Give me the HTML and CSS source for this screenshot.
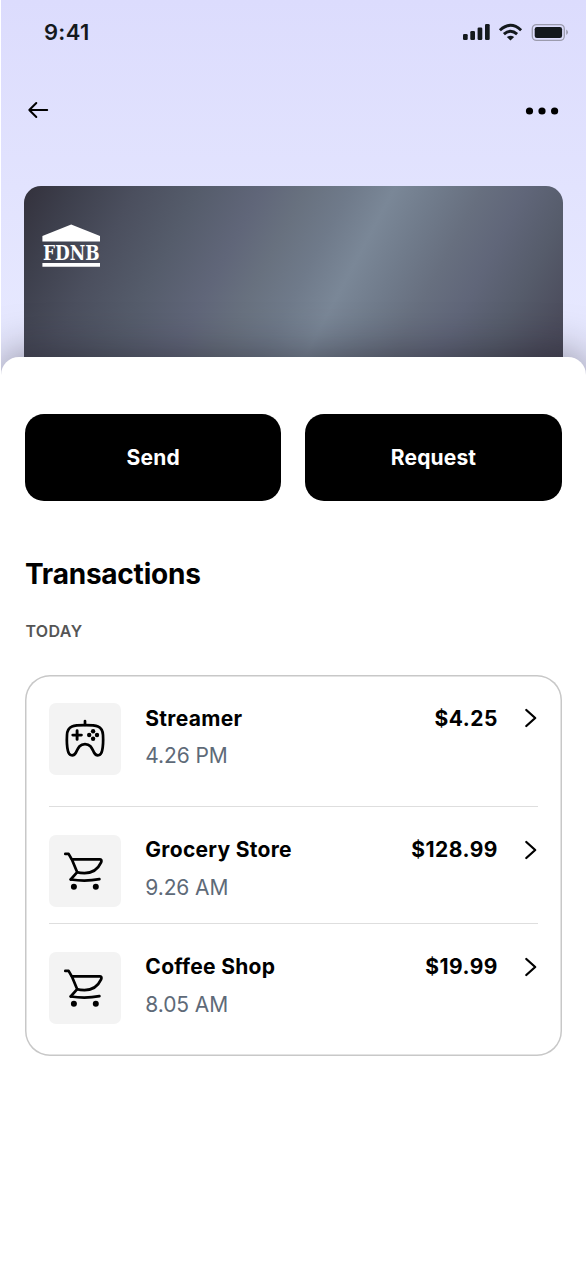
FILE: index.html
```html
<!DOCTYPE html>
<html lang="en">
<head>
<meta charset="utf-8">
<title>Transactions</title>
<link rel="stylesheet" href="styles.css">
</head>
<body>
<svg class="defs" aria-hidden="true">
  <symbol id="cart" viewBox="0 0 72 72">
    <g fill="none" stroke="#000" stroke-width="2.7" stroke-linecap="round" stroke-linejoin="round">
      <path d="M16.3 18.9H19.6L23 24.7L28.2 37.2L21.7 44.5"/>
      <path d="M23 24.3H51Q53.2 24.5 52.1 27.4C49 34.2 43.5 38.1 35.5 38.2C32 38.2 30 37.9 28.2 37.3"/>
      <path d="M21.8 44.5C31 45.9 42 45.7 50.4 44.2"/>
    </g>
    <circle cx="24.9" cy="51.8" r="3"/><circle cx="46.8" cy="51.8" r="3"/>
  </symbol>
  <symbol id="chevron" viewBox="0 0 14 20">
    <path d="M2.3 2L11.2 10L2.3 18" fill="none" stroke="#000" stroke-width="2.3" stroke-linecap="round" stroke-linejoin="round"/>
  </symbol>
</svg>
<div class="screen">
  <header class="hero">
    <div class="status">
      <span class="time">9:41</span>
      <svg class="indicators" width="108" height="20" viewBox="0 0 108 20">
        <g fill="#14191d">
          <rect x="1" y="12" width="4.7" height="6" rx="1.3"/>
          <rect x="8.3" y="9" width="4.7" height="9" rx="1.3"/>
          <rect x="15.6" y="5.5" width="4.7" height="12.5" rx="1.3"/>
          <rect x="23" y="2" width="4.7" height="16" rx="1.3"/>
          <path d="M48.5 18.6L44.8 15Q48.5 12.4 52.2 15Z"/>
          <rect x="72.7" y="5" width="27.4" height="11" rx="2.2"/>
        </g>
        <path d="M37.9 8.2Q48.5-1.5 59.1 8.2M41.9 12.2Q48.5 6.3 55.1 12.2" fill="none" stroke="#14191d" stroke-width="2.9"/>
        <rect x="70.3" y="2.6" width="32" height="15.8" rx="4.2" fill="none" stroke="#9b9bad" stroke-width="1.3"/>
        <path d="M104.2 7.6Q106 8.5 106 10.3T104.2 13Z" fill="#9b9bad"/>
      </svg>
    </div>
    <nav class="nav">
      <svg width="22" height="18" viewBox="0 0 22 18"><path d="M2.3 9H20.2M9.3 2L2.3 9L9.3 16" fill="none" stroke="#000" stroke-width="2" stroke-linecap="round" stroke-linejoin="round"/></svg>
      <svg width="34" height="10" viewBox="0 0 34 10"><circle cx="4.5" cy="5" r="3.6"/><circle cx="17" cy="5" r="3.6"/><circle cx="29.6" cy="5" r="3.6"/></svg>
    </nav>
    <div class="card">
      <svg class="bank" width="78" height="60" viewBox="0 0 78 60">
        <path d="M10.4 17.9L39.2 6.4L68 17.9V23.6H10.4Z"/>
        <text x="11" y="41.6" textLength="56.6" lengthAdjust="spacingAndGlyphs">FDNB</text>
        <path d="M10.4 45H68V48.7H10.4Z"/>
      </svg>
    </div>
  </header>
  <main class="sheet">
    <div class="actions">
      <button class="action">Send</button>
      <button class="action">Request</button>
    </div>
    <h1 class="title">Transactions</h1>
    <h2 class="day">TODAY</h2>
    <ul class="list">
      <li class="item item-first">
        <span class="tile">
          <svg width="72" height="72" viewBox="0 0 72 72">
            <g fill="none" stroke="#000" stroke-width="2.7" stroke-linecap="round" stroke-linejoin="round">
              <path d="M36 22V18"/>
              <path d="M36 22.2C42 22.2 46 22.3 49 23.5C52.5 25 53.8 28 54 32C54.3 37 54.2 43 53.1 47.8C52 53.3 47.3 53.7 45 49.5C43 45.5 41.8 41.1 36 41.1S29 45.5 27 49.5C24.7 53.7 20 53.3 18.9 47.8C17.8 43 17.7 37 18 32C18.2 28 19.5 25 23 23.5C26 22.3 30 22.2 36 22.2Z"/>
              <path d="M28.1 27.8V36.4M23.8 32.1H32.4" stroke-width="2.9"/>
            </g>
            <circle cx="44.1" cy="28.2" r="2.2"/><circle cx="44.1" cy="35.8" r="2.2"/><circle cx="40.2" cy="32" r="2.2"/><circle cx="48" cy="32" r="2.2"/>
          </svg>
        </span>
        <div class="info"><p class="name">Streamer</p><p class="when">4.26 PM</p></div>
        <span class="amount">$4.25</span>
        <svg class="chevron"><use href="#chevron"/></svg>
      </li>
      <li class="item">
        <span class="tile"><svg width="72" height="72"><use href="#cart"/></svg></span>
        <div class="info"><p class="name">Grocery Store</p><p class="when">9.26 AM</p></div>
        <span class="amount">$128.99</span>
        <svg class="chevron"><use href="#chevron"/></svg>
      </li>
      <li class="item">
        <span class="tile"><svg width="72" height="72"><use href="#cart"/></svg></span>
        <div class="info"><p class="name">Coffee Shop</p><p class="when">8.05 AM</p></div>
        <span class="amount">$19.99</span>
        <svg class="chevron"><use href="#chevron"/></svg>
      </li>
    </ul>
  </main>
</div>
</body>
</html>
```
FILE: styles.css
```css
* { box-sizing: border-box; }
body, h1, h2, p, ul { margin: 0; padding: 0; }
body { background: #fff; font-family: Inter, sans-serif; color: #000; }
.defs { display: block; width: 0; height: 0; }
svg { display: block; flex: none; }
.screen { width: 585px; height: 1266px; margin-left: 1px; overflow: hidden; background: linear-gradient(#dcdcfd 0, #e8eaff 374px); }
.hero { height: 357px; display: flex; flex-direction: column; }
.status { height: 64px; display: flex; justify-content: space-between; padding: 0 16px 0 43px; }
.time { font-size: 22px; font-weight: 600; line-height: 26px; margin-top: 19px; color: #14191d; letter-spacing: .3px; }
.indicators { margin-top: 22px; }
.nav { height: 122px; display: flex; justify-content: space-between; padding: 37px 27px 0 25.5px; }
.nav svg:last-child { margin-top: 5px; }
.card { height: 171px; margin: 0 22.7px 0 22.8px; padding: 32px 0 0 8.6px; border-radius: 17px 17px 0 0;
  background: linear-gradient(118deg, #33313c 0%, #3d3f4c 8%, #4b4f5e 18%, #555c6b 28%, #606679 38%, #68717f 45%, #6f7a8a 52%, #7a8797 59%, #707b8b 66%, #676f7f 73%, #606679 80%, #565c6b 88%, #4c4d5d 96%, #474757 100%); }
.bank { font: bold 20.5px "DejaVu Serif", serif; fill: #fff; }
.sheet { position: relative; height: 909px; padding: 57px 24.3px 0 24px; background: #fff; border-radius: 18px 18px 0 0; box-shadow: 0 0 46px rgba(20, 14, 26, .5); }
.actions { display: flex; gap: 24px; }
.action { flex: 1; height: 87px; border: 0; border-radius: 19px; background: #000; color: #fff; font: 700 21px Inter, sans-serif; letter-spacing: .15px; padding: 0; }
.title { margin-top: 55px; font-size: 28px; line-height: 36px; font-weight: 700; letter-spacing: -.23px; }
.day { margin-top: 28.5px; font-size: 16px; line-height: 20px; font-weight: 600; color: #555; letter-spacing: .4px; padding-left: .4px; }
.list { list-style: none; margin-top: 34.5px; height: 381px; padding: 28.4px 24px 0; border-radius: 25px; box-shadow: inset 0 0 0 1.5px #c8c8c8; }
.item { display: flex; height: 117px; padding-top: 28.5px; border-top: 1px solid #dedede; }
.item-first { border-top: 0; padding-top: 0; height: 102.6px; }
.tile { width: 72px; height: 72px; border-radius: 7px; background: #f3f3f3; }
.info { flex: 1; margin-left: 24.3px; }
.name, .amount { font-size: 21px; line-height: 30px; font-weight: 700; letter-spacing: .3px; }
.item-first .name, .item-first .amount { padding-top: .3px; }
.when { font-size: 21px; line-height: 30px; margin-top: 7.5px; color: #5e6a78; letter-spacing: -.1px; }
.amount { letter-spacing: .5px; }
.chevron { width: 14px; height: 20px; margin: 4.7px 0 0 25.7px; }
```
